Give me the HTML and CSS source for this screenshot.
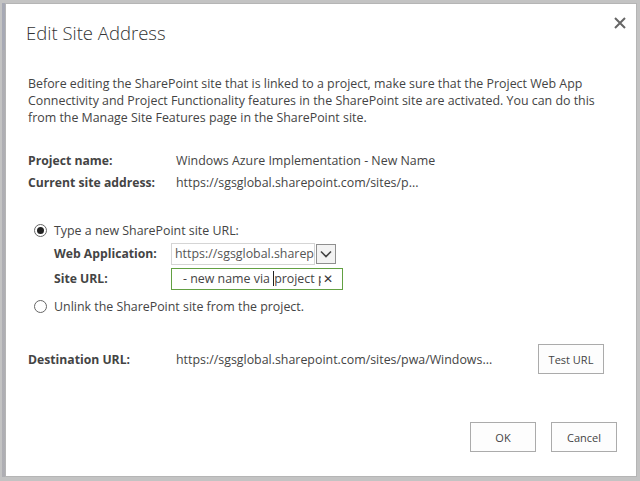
FILE: index.html
```html
<!DOCTYPE html>
<html>
<head>
<meta charset="utf-8">
<link rel="stylesheet" href="styles.css">
</head>
<body>
<div class="backdrop">
  <div class="strip"></div>
  <div class="dialog">
    <div class="header">
      <h1 class="title">Edit Site Address</h1>
      <button class="close" aria-label="Close">
        <svg width="12" height="12" viewBox="0 0 12 12"><path d="M1 1L11 11M11 1L1 11" stroke="#666" stroke-width="2" fill="none"/></svg>
      </button>
    </div>
    <p class="intro">Before editing the SharePoint site that is linked to a project, make sure that the Project Web App Connectivity and Project Functionality features in the SharePoint site are activated. You can do this from the Manage Site Features page in the SharePoint site.</p>
    <div class="info">
      <div class="lbl">Project name:</div><div class="val">Windows Azure Implementation - New Name</div>
      <div class="lbl">Current site address:</div><div class="val">https://sgsglobal.sharepoint.com/sites/p...</div>
    </div>
    <div class="options">
      <div class="radio-row first"><span class="radio checked"></span><span>Type a new SharePoint site URL:</span></div>
      <div class="sub">
        <div class="sub-row"><span class="sublbl">Web Application:</span>
          <div class="select"><span class="select-text">https://sgsglobal.sharep</span><span class="select-btn"><svg width="12" height="8" viewBox="0 0 12 8"><path d="M1 1.5L6 6.5L11 1.5" stroke="#444" stroke-width="1.6" fill="none"/></svg></span></div>
        </div>
        <div class="sub-row"><span class="sublbl">Site URL:</span>
          <div class="input"><span class="input-text">- new name via <span class="caret"></span>project p</span><span class="clear">✕</span></div>
        </div>
      </div>
      <div class="radio-row"><span class="radio"></span><span>Unlink the SharePoint site from the project.</span></div>
    </div>
    <div class="dest">
      <div class="lbl">Destination URL:</div>
      <div class="dest-val">https://sgsglobal.sharepoint.com/sites/pwa/Windows...</div>
      <button class="btn">Test URL</button>
    </div>
    <div class="footer">
      <button class="btn">OK</button>
      <button class="btn">Cancel</button>
    </div>
  </div>
</div>
</body>
</html>
```
FILE: styles.css
```css
html, body { margin: 0; padding: 0; }
body {
  width: 640px; height: 481px; overflow: hidden;
  background: #c3c3c3;
  font-family: "Open Sans", "Noto Sans", sans-serif;
  font-size: 12.4px; color: #444;
}
.backdrop {
  display: flex; height: 481px; box-sizing: border-box;
  padding: 3px 3px 4px 0;
}
.strip {
  width: 3px; margin-left: 2px;
  background: linear-gradient(#8a8fa6 0 10%, #9a9aa4 10% 100%);
  opacity: .5;
}
.dialog {
  flex: 1; background: #fff; border: 1px solid #b5b5b5;
  box-sizing: border-box;
  padding: 0 19px 0 22px;
  display: flex; flex-direction: column;
}
.header { height: 56px; display: flex; align-items: center; justify-content: space-between; margin-left: -2px; }
.title { margin: 0; font-size: 18.5px; font-weight: 300; color: #333; }
.close { border: 0; background: none; padding: 0; margin-right: -11px; margin-top: -18px; width: 16px; height: 16px; display: flex; align-items: center; justify-content: center; }
.intro { margin: 15px 0 0; line-height: 17px; width: 580px; }
.info { margin-top: 23px; display: grid; grid-template-columns: 148px 1fr; grid-auto-rows: 22px; align-items: center; }
.lbl { font-weight: 700; font-size: 12.2px; }
.options { margin-top: 26px; }
.radio-row { display: flex; align-items: center; height: 22px; margin-top: 4px; }
.radio-row.first { margin-top: 0; }
.radio { width: 11px; height: 11px; border: 1px solid #666; border-radius: 50%; margin-left: 6px; margin-right: 7px; box-sizing: content-box; display: flex; align-items: center; justify-content: center; }
.radio.checked::after { content: ""; width: 7px; height: 7px; border-radius: 50%; background: #222; }
.sub { padding-left: 26px; }
.sub-row { display: flex; align-items: center; height: 25px; }
.sublbl { width: 117px; font-weight: 700; font-size: 12.2px; }
.select { display: flex; align-items: center; height: 22px; }
.select-text { width: 139px; height: 20px; border: 1px solid #d5d5d5; display: flex; align-items: center; padding-left: 3px; box-sizing: content-box; color: #555; overflow: hidden; white-space: nowrap; }
.select-btn { width: 18px; height: 18px; border: 1px solid #8f8f8f; background: #f3f3f3; margin-left: 1px; display: flex; align-items: center; justify-content: center; }
.input { width: 172px; height: 22px; box-sizing: border-box; border: 1px solid #62a042; display: flex; align-items: center; padding-left: 11px; padding-right: 9px; }
.input-text { flex: 1; white-space: nowrap; overflow: hidden; }
.caret { display: inline-block; width: 1px; height: 15px; background: #222; vertical-align: -3px; }
.clear { font-size: 12px; color: #333; margin-left: 2px; }
.dest { margin-top: 27px; display: flex; align-items: center; height: 30px; }
.dest .lbl { width: 148px; }
.dest-val { width: 362px; }
.btn {
  font-family: inherit; font-size: 11px; color: #444;
  width: 66px; height: 30px; background: #fdfdfd; border: 1px solid #ababab;
  padding: 0;
}
.footer { margin-top: 48px; display: flex; justify-content: flex-end; gap: 15px; }
```
